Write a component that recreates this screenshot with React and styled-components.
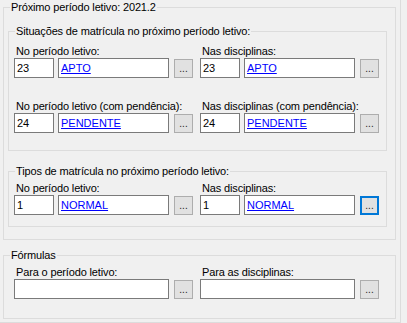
import styled, { createGlobalStyle } from "styled-components";

const GlobalStyle = createGlobalStyle`
  body {
    margin: 0;
    background: #f0f0f0;
    font-family: "Liberation Sans", Arial, sans-serif;
    font-size: 11px;
    color: #000;
  }
`;

const Page = styled.div`
  width: 401px;
  height: 323px;
  box-sizing: border-box;
  border-right: 1px solid #dcdcdc;
  border-bottom: 1px solid #dcdcdc;
  padding: 7px 0 0 3px;
  display: flex;
  flex-direction: column;
`;

const Group = styled.div`
  position: relative;
  box-sizing: border-box;
  border: 1px solid #dcdcdc;
  width: ${(p) => p.$width}px;
  padding: ${(p) => p.$pad};
  margin-top: ${(p) => p.$top || 0}px;
  display: flex;
  flex-direction: column;
  gap: ${(p) => p.$gap || 0}px;
`;

const GroupTitle = styled.span`
  position: absolute;
  top: -7px;
  left: 6px;
  padding: 0 1px;
  background: #f0f0f0;
  line-height: 13px;
  letter-spacing: -0.15px;
  white-space: nowrap;
`;

const FieldRow = styled.div`
  display: grid;
  grid-template-columns: 179px 179px;
  column-gap: 7px;
`;

const Field = styled.div`
  display: flex;
  flex-direction: column;
`;

const Label = styled.div`
  height: 13px;
  line-height: 13px;
  padding-left: 2px;
  letter-spacing: -0.15px;
  white-space: nowrap;
`;

const InputRow = styled.div`
  display: flex;
  align-items: flex-start;
`;

const TextBox = styled.div`
  box-sizing: border-box;
  width: ${(p) => p.$width}px;
  height: 20px;
  margin-right: ${(p) => p.$gap || 0}px;
  border: 1px solid #7a7a7a;
  background: #fff;
  padding-left: 2px;
  line-height: 18px;
  white-space: nowrap;
  overflow: hidden;
`;

const Link = styled.span`
  color: #0000ff;
  text-decoration: underline;
`;

const BrowseButton = styled.div`
  box-sizing: border-box;
  width: 19px;
  height: 19px;
  margin-top: 1px;
  border: ${(p) => (p.$focused ? "2px solid #0078d7" : "1px solid #adadad")};
  background: #e1e1e1;
  display: flex;
  align-items: center;
  justify-content: center;
  line-height: 11px;
  padding-bottom: 1px;
  font-size: 10px;
  color: #222;
`;

function LookupField({ label, code, value, focused }) {
  return (
    <Field>
      <Label>{label}</Label>
      <InputRow>
        <TextBox $width={40} $gap={4}>{code}</TextBox>
        <TextBox $width={111} $gap={5}>
          <Link>{value}</Link>
        </TextBox>
        <BrowseButton $focused={focused}>...</BrowseButton>
      </InputRow>
    </Field>
  );
}

function FormulaField({ label }) {
  return (
    <Field>
      <Label>{label}</Label>
      <InputRow>
        <TextBox $width={155} $gap={5} />
        <BrowseButton>...</BrowseButton>
      </InputRow>
    </Field>
  );
}

export default function App() {
  return (
    <>
      <GlobalStyle />
      <Page>
        <Group $width={393} $pad="23px 8px 12px 4px" $gap={20}>
          <GroupTitle>Próximo período letivo: 2021.2</GroupTitle>
          <Group $width={379} $pad="13px 7px 17px 5px" $gap={22}>
            <GroupTitle>Situações de matrícula no próximo período letivo:</GroupTitle>
            <FieldRow>
              <LookupField label="No período letivo:" code="23" value="APTO" />
              <LookupField label="Nas disciplinas:" code="23" value="APTO" />
            </FieldRow>
            <FieldRow>
              <LookupField
                label="No período letivo (com pendência):"
                code="24"
                value="PENDENTE"
              />
              <LookupField
                label="Nas disciplinas (com pendência):"
                code="24"
                value="PENDENTE"
              />
            </FieldRow>
          </Group>
          <Group $width={379} $pad="10px 7px 11px 5px">
            <GroupTitle>Tipos de matrícula no próximo período letivo:</GroupTitle>
            <FieldRow>
              <LookupField label="No período letivo:" code="1" value="NORMAL" />
              <LookupField label="Nas disciplinas:" code="1" value="NORMAL" focused />
            </FieldRow>
          </Group>
        </Group>
        <Group $width={393} $pad="10px 7px 19px 10px" $top={15}>
          <GroupTitle>Fórmulas</GroupTitle>
          <FieldRow>
            <FormulaField label="Para o período letivo:" />
            <FormulaField label="Para as disciplinas:" />
          </FieldRow>
        </Group>
      </Page>
    </>
  );
}
